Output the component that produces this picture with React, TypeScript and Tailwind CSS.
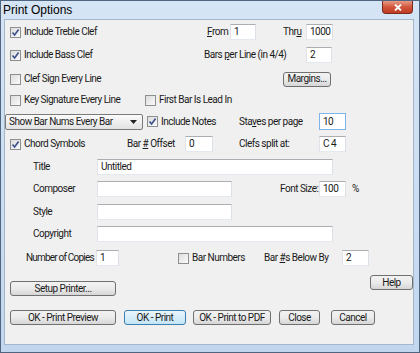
import type { ReactNode } from 'react';

/**
 * Band-in-a-Box style "Print Options" dialog, Windows 7 look.
 */

function Box({ checked }: { checked?: boolean }) {
  return (
    <div className="w-[11px] h-[11px] shrink-0 border border-[#8e8f8f] bg-gradient-to-br from-[#dcdcdc] to-[#fbfbfb] flex items-center justify-center">
      {checked && (
        <svg width="9" height="9" viewBox="0 0 9 9">
          <path d="M1.5 4.5 L3.6 7 L7.6 1.5" fill="none" stroke="#3b4f8a" strokeWidth="1.6" />
        </svg>
      )}
    </div>
  );
}

function Check({ label, checked, w }: { label: ReactNode; checked?: boolean; w: string }) {
  return (
    <div className={`flex items-center gap-[3px] shrink-0 ${w}`}>
      <Box checked={checked} />
      <span className="whitespace-nowrap">{label}</span>
    </div>
  );
}

function Field({ value, w, h = 'h-[16px]', focus }: { value?: string; w: string; h?: string; focus?: boolean }) {
  return (
    <div
      className={`${w} ${h} shrink-0 bg-white border pl-[3px] flex items-center ${
        focus
          ? 'border-[#7eb4ea]'
          : 'border-t-[#abadb3] border-l-[#e2e3ea] border-r-[#dbdfe6] border-b-[#e3e9ef]'
      }`}
    >
      {value}
    </div>
  );
}

function Btn({ children, w, def, cls = '' }: { children: ReactNode; w: string; def?: boolean; cls?: string }) {
  return (
    <div
      className={`${w} h-[15px] shrink-0 whitespace-nowrap rounded-[3px] border flex items-center justify-center ${cls} ${
        def
          ? 'border-[#3c7fb1] bg-gradient-to-b from-[#eaf6fd] to-[#c4e5f6]'
          : 'border-[#707070] bg-gradient-to-b from-[#f2f2f2] via-[#ebebeb] to-[#d6d6d6]'
      }`}
    >
      {children}
    </div>
  );
}

function Label({ children, w, cls = '' }: { children: ReactNode; w: string; cls?: string }) {
  return <span className={`${w} shrink-0 whitespace-nowrap ${cls}`}>{children}</span>;
}

export default function App() {
  return (
    <div className="w-[420px] h-[353px] border border-[#4f6580] bg-gradient-to-b from-[#d6e5f5] to-[#c2d7ee] flex flex-col text-[#1a1a1a] font-['Roboto','Liberation_Sans',sans-serif] text-[10px] tracking-[-0.5px] leading-none">
      {/* Title bar */}
      <div className="h-[18px] shrink-0 flex items-start justify-between">
        <span className="pl-[2px] pt-[3px] text-[12px] tracking-normal font-['Liberation_Sans',sans-serif] text-black">Print Options</span>
        <div className="w-[31px] h-[13px] mr-[6px] rounded-b-[4px] border border-t-0 border-[#7a2b1f] bg-gradient-to-b from-[#e69a85] via-[#d2553c] to-[#c03a22] flex items-center justify-center">
          <svg width="8" height="7" viewBox="0 0 8 7">
            <path d="M1 0.5 L7 6.5 M7 0.5 L1 6.5" stroke="white" strokeWidth="1.8" />
          </svg>
        </div>
      </div>

      {/* Client area */}
      <div className="flex-1 ml-[3px] mr-[5px] mb-[7px] border border-[#a3b6cc] bg-[#f0f0f0] flex flex-col">
        {/* Row 1 */}
        <div className="flex items-center h-[16px] mt-[4px] pl-[5px]">
          <Check checked label="Include Treble Clef" w="w-[197px]" />
          <Label w="w-[23px]"><u>F</u>rom</Label>
          <Field value="1" w="w-[26px]" />
          <Label w="w-[23px]" cls="ml-[27px]">Thr<u>u</u></Label>
          <Field value="1000" w="w-[27px]" />
        </div>

        {/* Row 2 */}
        <div className="flex items-center h-[16px] mt-[7px] pl-[5px]">
          <Check checked label="Include Bass Clef" w="w-[194px]" />
          <Label w="w-[102px]">Bars <u>p</u>er Line (in 4/4)</Label>
          <Field value="2" w="w-[26px]" />
        </div>

        {/* Row 3 */}
        <div className="flex items-center h-[16px] mt-[8px] pl-[5px]">
          <Check label="Clef Sign Every Line" w="w-[273px]" />
          <Btn w="w-[48px]">Margins...</Btn>
        </div>

        {/* Row 4 */}
        <div className="flex items-center h-[16px] mt-[5px] pl-[5px]">
          <Check label="Key Signature Every Line" w="w-[135px]" />
          <Check label="First Bar Is Lead In" w="w-[120px]" />
        </div>

        {/* Row 5 */}
        <div className="flex items-center h-[17px] mt-[5px]">
          <div className="w-[138px] h-[16px] shrink-0 rounded-[2px] border border-[#7a7a7a] bg-gradient-to-b from-[#fbfbfb] to-[#e2e2e2] flex items-center justify-between pl-[3px] pr-[5px]">
            <span className="whitespace-nowrap">Show Bar Nums Every Bar</span>
            <svg width="7" height="4" viewBox="0 0 7 4">
              <path d="M0 0 H7 L3.5 4 Z" fill="#222" />
            </svg>
          </div>
          <div className="ml-[4px]">
            <Check checked label="Include Notes" w="w-[92px]" />
          </div>
          <Label w="w-[80px]">Sta<u>v</u>es per page</Label>
          <Field value="10" w="w-[27px]" h="h-[17px]" focus />
        </div>

        {/* Row 6 */}
        <div className="flex items-center h-[16px] mt-[6px] pl-[5px]">
          <Check checked label="Chord Symbols" w="w-[117px]" />
          <Label w="w-[58px]">Bar <u>#</u> Offset</Label>
          <Field value="0" w="w-[28px]" />
          <Label w="w-[80px]" cls="ml-[26px]">Clefs split at:</Label>
          <Field value="C 4" w="w-[27px]" />
        </div>

        {/* Row 7 */}
        <div className="flex items-center h-[16px] mt-[7px] pl-[28px]">
          <Label w="w-[64px]">Title</Label>
          <Field value="Untitled" w="w-[236px]" />
        </div>

        {/* Row 8 */}
        <div className="flex items-center h-[16px] mt-[6px] pl-[28px]">
          <Label w="w-[64px]">Composer</Label>
          <Field w="w-[135px]" />
          <Label w="w-[39px]" cls="ml-[48px]">Font Size:</Label>
          <Field value="100" w="w-[27px]" />
          <span className="ml-[6px]">%</span>
        </div>

        {/* Row 9 */}
        <div className="flex items-center h-[16px] mt-[7px] pl-[28px]">
          <Label w="w-[64px]">Style</Label>
          <Field w="w-[135px]" />
        </div>

        {/* Row 10 */}
        <div className="flex items-center h-[16px] mt-[6px] pl-[28px]">
          <Label w="w-[64px]">Copyright</Label>
          <Field w="w-[236px]" />
        </div>

        {/* Row 11 */}
        <div className="flex items-center h-[16px] mt-[8px] pl-[21px]">
          <Label w="w-[70px]" cls="tracking-[-0.8px]">Number of Copies</Label>
          <Field value="1" w="w-[23px]" />
          <div className="ml-[59px]">
            <Check label="Bar Numbers" w="w-[86px]" />
          </div>
          <Label w="w-[78px]">Bar <u>#</u>s Below By</Label>
          <Field value="2" w="w-[27px]" />
        </div>

        {/* Row 12 */}
        <div className="flex h-[22px] mt-[8px] pl-[5px]">
          <Btn w="w-[106px]" cls="self-end">Setup Printer...</Btn>
          <Btn w="w-[43px]" cls="ml-[254px] mt-[1px]">Help</Btn>
        </div>

        {/* Row 13 */}
        <div className="flex items-center h-[15px] mt-[14px] pl-[5px]">
          <Btn w="w-[106px]">OK - Print Preview</Btn>
          <Btn w="w-[62px]" cls="ml-[8px]" def>OK - Print</Btn>
          <Btn w="w-[78px]" cls="ml-[7px]">OK - Print to PDF</Btn>
          <Btn w="w-[41px]" cls="ml-[8px]">Close</Btn>
          <Btn w="w-[44px]" cls="ml-[11px]">Cancel</Btn>
        </div>
      </div>
    </div>
  );
}
